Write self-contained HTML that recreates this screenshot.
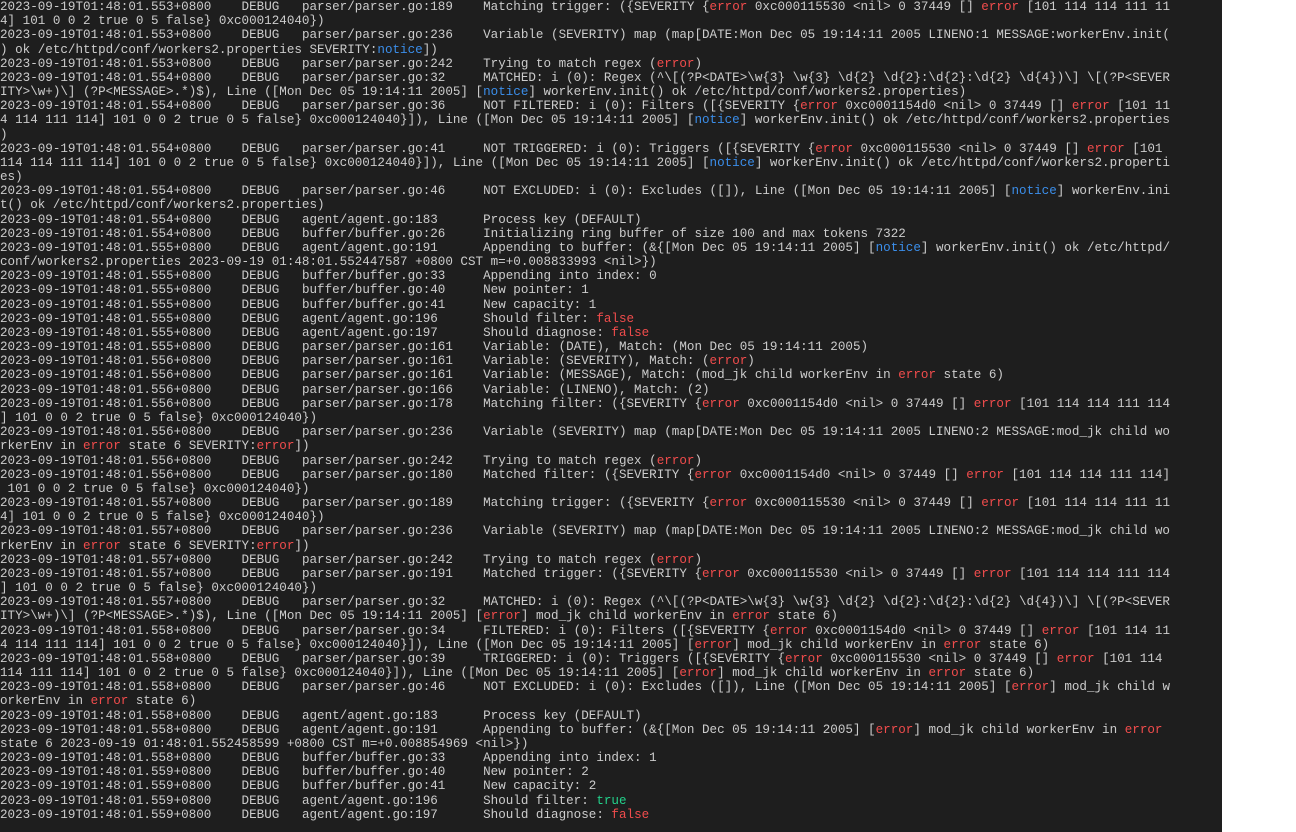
<!DOCTYPE html>
<html><head><meta charset="utf-8">
<style>
html,body{margin:0;padding:0;background:#fff;width:1296px;height:832px;overflow:hidden}
#t{position:absolute;left:0;top:0;width:1222px;height:832px;background:#1e1e1e;overflow:hidden}
pre{margin:0;padding:0;font-family:"Liberation Mono",monospace;font-size:12.58px;line-height:14.17px;color:#cccccc;tab-size:8;-moz-tab-size:8;white-space:pre}
.r{color:#f14c4c}.b{color:#3b8eea}.g{color:#23d18b}
</style></head><body><div id="t"><pre>2023-09-19T01:48:01.553+0800	DEBUG	parser/parser.go:189	Matching trigger: ({SEVERITY {<span class="r">error</span> 0xc000115530 &lt;nil&gt; 0 37449 [] <span class="r">error</span> [101 114 114 111 11
4] 101 0 0 2 true 0 5 false} 0xc000124040})
2023-09-19T01:48:01.553+0800	DEBUG	parser/parser.go:236	Variable (SEVERITY) map (map[DATE:Mon Dec 05 19:14:11 2005 LINENO:1 MESSAGE:workerEnv.init(
) ok /etc/httpd/conf/workers2.properties SEVERITY:<span class="b">notice</span>])
2023-09-19T01:48:01.553+0800	DEBUG	parser/parser.go:242	Trying to match regex (<span class="r">error</span>)
2023-09-19T01:48:01.554+0800	DEBUG	parser/parser.go:32	MATCHED: i (0): Regex (^\[(?P&lt;DATE&gt;\w{3} \w{3} \d{2} \d{2}:\d{2}:\d{2} \d{4})\] \[(?P&lt;SEVER
ITY&gt;\w+)\] (?P&lt;MESSAGE&gt;.*)$), Line ([Mon Dec 05 19:14:11 2005] [<span class="b">notice</span>] workerEnv.init() ok /etc/httpd/conf/workers2.properties)
2023-09-19T01:48:01.554+0800	DEBUG	parser/parser.go:36	NOT FILTERED: i (0): Filters ([{SEVERITY {<span class="r">error</span> 0xc0001154d0 &lt;nil&gt; 0 37449 [] <span class="r">error</span> [101 11
4 114 111 114] 101 0 0 2 true 0 5 false} 0xc000124040}]), Line ([Mon Dec 05 19:14:11 2005] [<span class="b">notice</span>] workerEnv.init() ok /etc/httpd/conf/workers2.properties
)
2023-09-19T01:48:01.554+0800	DEBUG	parser/parser.go:41	NOT TRIGGERED: i (0): Triggers ([{SEVERITY {<span class="r">error</span> 0xc000115530 &lt;nil&gt; 0 37449 [] <span class="r">error</span> [101
114 114 111 114] 101 0 0 2 true 0 5 false} 0xc000124040}]), Line ([Mon Dec 05 19:14:11 2005] [<span class="b">notice</span>] workerEnv.init() ok /etc/httpd/conf/workers2.properti
es)
2023-09-19T01:48:01.554+0800	DEBUG	parser/parser.go:46	NOT EXCLUDED: i (0): Excludes ([]), Line ([Mon Dec 05 19:14:11 2005] [<span class="b">notice</span>] workerEnv.ini
t() ok /etc/httpd/conf/workers2.properties)
2023-09-19T01:48:01.554+0800	DEBUG	agent/agent.go:183	Process key (DEFAULT)
2023-09-19T01:48:01.554+0800	DEBUG	buffer/buffer.go:26	Initializing ring buffer of size 100 and max tokens 7322
2023-09-19T01:48:01.555+0800	DEBUG	agent/agent.go:191	Appending to buffer: (&amp;{[Mon Dec 05 19:14:11 2005] [<span class="b">notice</span>] workerEnv.init() ok /etc/httpd/
conf/workers2.properties 2023-09-19 01:48:01.552447587 +0800 CST m=+0.008833993 &lt;nil&gt;})
2023-09-19T01:48:01.555+0800	DEBUG	buffer/buffer.go:33	Appending into index: 0
2023-09-19T01:48:01.555+0800	DEBUG	buffer/buffer.go:40	New pointer: 1
2023-09-19T01:48:01.555+0800	DEBUG	buffer/buffer.go:41	New capacity: 1
2023-09-19T01:48:01.555+0800	DEBUG	agent/agent.go:196	Should filter: <span class="r">false</span>
2023-09-19T01:48:01.555+0800	DEBUG	agent/agent.go:197	Should diagnose: <span class="r">false</span>
2023-09-19T01:48:01.555+0800	DEBUG	parser/parser.go:161	Variable: (DATE), Match: (Mon Dec 05 19:14:11 2005)
2023-09-19T01:48:01.556+0800	DEBUG	parser/parser.go:161	Variable: (SEVERITY), Match: (<span class="r">error</span>)
2023-09-19T01:48:01.556+0800	DEBUG	parser/parser.go:161	Variable: (MESSAGE), Match: (mod_jk child workerEnv in <span class="r">error</span> state 6)
2023-09-19T01:48:01.556+0800	DEBUG	parser/parser.go:166	Variable: (LINENO), Match: (2)
2023-09-19T01:48:01.556+0800	DEBUG	parser/parser.go:178	Matching filter: ({SEVERITY {<span class="r">error</span> 0xc0001154d0 &lt;nil&gt; 0 37449 [] <span class="r">error</span> [101 114 114 111 114
] 101 0 0 2 true 0 5 false} 0xc000124040})
2023-09-19T01:48:01.556+0800	DEBUG	parser/parser.go:236	Variable (SEVERITY) map (map[DATE:Mon Dec 05 19:14:11 2005 LINENO:2 MESSAGE:mod_jk child wo
rkerEnv in <span class="r">error</span> state 6 SEVERITY:<span class="r">error</span>])
2023-09-19T01:48:01.556+0800	DEBUG	parser/parser.go:242	Trying to match regex (<span class="r">error</span>)
2023-09-19T01:48:01.556+0800	DEBUG	parser/parser.go:180	Matched filter: ({SEVERITY {<span class="r">error</span> 0xc0001154d0 &lt;nil&gt; 0 37449 [] <span class="r">error</span> [101 114 114 111 114]
 101 0 0 2 true 0 5 false} 0xc000124040})
2023-09-19T01:48:01.557+0800	DEBUG	parser/parser.go:189	Matching trigger: ({SEVERITY {<span class="r">error</span> 0xc000115530 &lt;nil&gt; 0 37449 [] <span class="r">error</span> [101 114 114 111 11
4] 101 0 0 2 true 0 5 false} 0xc000124040})
2023-09-19T01:48:01.557+0800	DEBUG	parser/parser.go:236	Variable (SEVERITY) map (map[DATE:Mon Dec 05 19:14:11 2005 LINENO:2 MESSAGE:mod_jk child wo
rkerEnv in <span class="r">error</span> state 6 SEVERITY:<span class="r">error</span>])
2023-09-19T01:48:01.557+0800	DEBUG	parser/parser.go:242	Trying to match regex (<span class="r">error</span>)
2023-09-19T01:48:01.557+0800	DEBUG	parser/parser.go:191	Matched trigger: ({SEVERITY {<span class="r">error</span> 0xc000115530 &lt;nil&gt; 0 37449 [] <span class="r">error</span> [101 114 114 111 114
] 101 0 0 2 true 0 5 false} 0xc000124040})
2023-09-19T01:48:01.557+0800	DEBUG	parser/parser.go:32	MATCHED: i (0): Regex (^\[(?P&lt;DATE&gt;\w{3} \w{3} \d{2} \d{2}:\d{2}:\d{2} \d{4})\] \[(?P&lt;SEVER
ITY&gt;\w+)\] (?P&lt;MESSAGE&gt;.*)$), Line ([Mon Dec 05 19:14:11 2005] [<span class="r">error</span>] mod_jk child workerEnv in <span class="r">error</span> state 6)
2023-09-19T01:48:01.558+0800	DEBUG	parser/parser.go:34	FILTERED: i (0): Filters ([{SEVERITY {<span class="r">error</span> 0xc0001154d0 &lt;nil&gt; 0 37449 [] <span class="r">error</span> [101 114 11
4 114 111 114] 101 0 0 2 true 0 5 false} 0xc000124040}]), Line ([Mon Dec 05 19:14:11 2005] [<span class="r">error</span>] mod_jk child workerEnv in <span class="r">error</span> state 6)
2023-09-19T01:48:01.558+0800	DEBUG	parser/parser.go:39	TRIGGERED: i (0): Triggers ([{SEVERITY {<span class="r">error</span> 0xc000115530 &lt;nil&gt; 0 37449 [] <span class="r">error</span> [101 114
114 111 114] 101 0 0 2 true 0 5 false} 0xc000124040}]), Line ([Mon Dec 05 19:14:11 2005] [<span class="r">error</span>] mod_jk child workerEnv in <span class="r">error</span> state 6)
2023-09-19T01:48:01.558+0800	DEBUG	parser/parser.go:46	NOT EXCLUDED: i (0): Excludes ([]), Line ([Mon Dec 05 19:14:11 2005] [<span class="r">error</span>] mod_jk child w
orkerEnv in <span class="r">error</span> state 6)
2023-09-19T01:48:01.558+0800	DEBUG	agent/agent.go:183	Process key (DEFAULT)
2023-09-19T01:48:01.558+0800	DEBUG	agent/agent.go:191	Appending to buffer: (&amp;{[Mon Dec 05 19:14:11 2005] [<span class="r">error</span>] mod_jk child workerEnv in <span class="r">error</span>
state 6 2023-09-19 01:48:01.552458599 +0800 CST m=+0.008854969 &lt;nil&gt;})
2023-09-19T01:48:01.558+0800	DEBUG	buffer/buffer.go:33	Appending into index: 1
2023-09-19T01:48:01.559+0800	DEBUG	buffer/buffer.go:40	New pointer: 2
2023-09-19T01:48:01.559+0800	DEBUG	buffer/buffer.go:41	New capacity: 2
2023-09-19T01:48:01.559+0800	DEBUG	agent/agent.go:196	Should filter: <span class="g">true</span>
2023-09-19T01:48:01.559+0800	DEBUG	agent/agent.go:197	Should diagnose: <span class="r">false</span></pre></div></body></html>
